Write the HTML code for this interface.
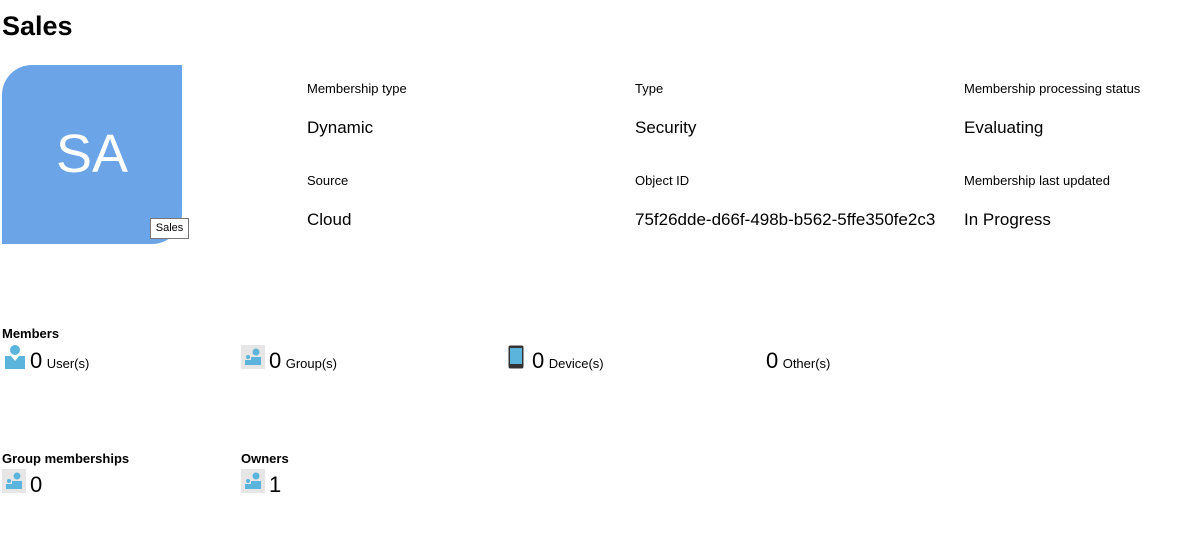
<!DOCTYPE html>
<html><head><style>
body{margin:0;width:1177px;height:535px;background:#fff;font-family:"Liberation Sans",sans-serif;color:#000;position:relative;overflow:hidden}
.a{position:absolute;white-space:nowrap}
h1{position:absolute;left:2px;top:11px;margin:0;font-size:27px;font-weight:bold}
.av{position:absolute;left:2px;top:65px;width:180px;height:179px;background:#6ba4e7;border-radius:30px 0 30px 0}
.av span{position:absolute;left:0;right:0;top:58px;text-align:center;color:#fff;font-size:54px}
.tip{position:absolute;left:150px;top:218px;width:37px;height:19px;border:1px solid #777;background:#fff;font-size:11px;text-align:center;line-height:19px}
.l{font-size:13px}
.v{font-size:17px}
.b{font-size:13px;font-weight:bold}
.n{font-size:22px}
.s{font-size:13px}
.gi{position:absolute;width:24px;height:24px;background:#e6e6e6}
</style></head><body>
<h1>Sales</h1>
<div class="av"><span>SA</span></div>
<div class="tip">Sales</div>
<div class="a l" style="left:307px;top:81px">Membership type</div>
<div class="a v" style="left:307px;top:118px">Dynamic</div>
<div class="a l" style="left:635px;top:81px">Type</div>
<div class="a v" style="left:635px;top:118px">Security</div>
<div class="a l" style="left:964px;top:81px">Membership processing status</div>
<div class="a v" style="left:964px;top:118px">Evaluating</div>
<div class="a l" style="left:307px;top:173px">Source</div>
<div class="a v" style="left:307px;top:210px">Cloud</div>
<div class="a l" style="left:635px;top:173px">Object ID</div>
<div class="a v" style="left:635px;top:210px">75f26dde-d66f-498b-b562-5ffe350fe2c3</div>
<div class="a l" style="left:964px;top:173px">Membership last updated</div>
<div class="a v" style="left:964px;top:210px">In Progress</div>

<div class="a b" style="left:2px;top:326px">Members</div>
<svg class="a" style="left:5px;top:345px" width="20" height="24"><circle cx="10" cy="5" r="5" fill="#5ab4dc"/><path d="M0 11h6l4 5 4-5h6v13H0z" fill="#5ab4dc"/></svg>
<div class="a" style="left:30px;top:348px"><span class="n">0</span> <span class="s">User(s)</span></div>
<svg class="a" style="left:241px;top:345px" width="24" height="24"><rect width="24" height="24" fill="#e6e6e6"/><circle cx="15" cy="7" r="3.5" fill="#5ab4dc"/><path d="M10 12h10v8H10z" fill="#5ab4dc"/><circle cx="7" cy="12" r="2" fill="#5ab4dc"/><path d="M4 15h6v5H4z" fill="#5ab4dc"/></svg>
<div class="a" style="left:269px;top:348px"><span class="n">0</span> <span class="s">Group(s)</span></div>
<svg class="a" style="left:508px;top:345px" width="16" height="24"><rect x="0.5" y="0.5" width="15" height="23" rx="2" fill="#333"/><rect x="2" y="3" width="12" height="16" fill="#5ab4dc"/></svg>
<div class="a" style="left:532px;top:348px"><span class="n">0</span> <span class="s">Device(s)</span></div>
<div class="a" style="left:766px;top:348px"><span class="n">0</span> <span class="s">Other(s)</span></div>

<div class="a b" style="left:2px;top:451px">Group memberships</div>
<svg class="a" style="left:2px;top:469px" width="24" height="24"><rect width="24" height="24" fill="#e6e6e6"/><circle cx="15" cy="7" r="3.5" fill="#5ab4dc"/><path d="M10 12h10v8H10z" fill="#5ab4dc"/><circle cx="7" cy="12" r="2" fill="#5ab4dc"/><path d="M4 15h6v5H4z" fill="#5ab4dc"/></svg>
<div class="a n" style="left:30px;top:472px">0</div>
<div class="a b" style="left:241px;top:451px">Owners</div>
<svg class="a" style="left:241px;top:469px" width="24" height="24"><rect width="24" height="24" fill="#e6e6e6"/><circle cx="15" cy="7" r="3.5" fill="#5ab4dc"/><path d="M10 12h10v8H10z" fill="#5ab4dc"/><circle cx="7" cy="12" r="2" fill="#5ab4dc"/><path d="M4 15h6v5H4z" fill="#5ab4dc"/></svg>
<div class="a n" style="left:269px;top:472px">1</div>
</body></html>
